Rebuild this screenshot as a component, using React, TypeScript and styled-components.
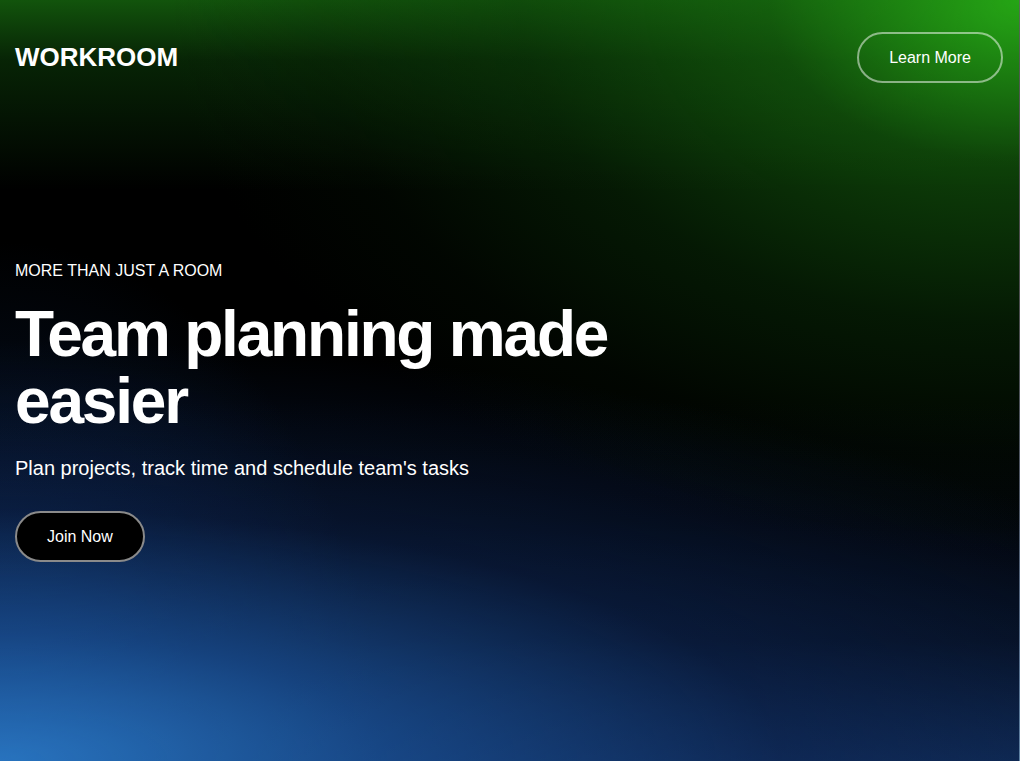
import React from "react";
import styled, { createGlobalStyle } from "styled-components";

const Global = createGlobalStyle`
  html, body { margin: 0; padding: 0; background: #000; }
  body { font-family: "Liberation Sans", Arial, sans-serif; color: #fff; }
  * { box-sizing: border-box; }
`;

const Page = styled.div`
  min-height: 761px;
  display: flex;
  flex-direction: column;
  border-right: 1px solid rgba(140, 140, 140, 0.55);
  background:
    radial-gradient(ellipse 1000px 650px at 100% 0%, rgba(37, 165, 21, 1) 0%, rgba(22, 105, 14, 0.6) 25%, rgba(12, 62, 9, 0.4) 50%, rgba(8, 40, 6, 0.15) 70%, transparent 85%),
    linear-gradient(180deg, rgba(18, 84, 12, 1) 0%, rgba(12, 60, 9, 0.6) 60px, transparent 190px),
    radial-gradient(ellipse 1300px 420px at 0% 100%, rgba(40, 115, 190, 1) 0%, rgba(26, 80, 150, 0.75) 30%, rgba(14, 40, 90, 0.45) 60%, transparent 100%),
    radial-gradient(ellipse 380px 520px at 0% 100%, rgba(20, 70, 140, 0.6) 0%, rgba(12, 40, 85, 0.35) 55%, transparent 100%),
    linear-gradient(0deg, rgba(18, 50, 100, 0.8) 0%, rgba(10, 28, 60, 0.5) 120px, rgba(6, 16, 36, 0.25) 240px, transparent 360px),
    #000;
`;

const Header = styled.header`
  display: flex;
  align-items: center;
  justify-content: space-between;
  padding: 32px 16px 0 15px;
`;

const Logo = styled.div`
  font-size: 26px;
  font-weight: 700;
`;

const PillButton = styled.button<{ $dark?: boolean }>`
  font-family: "Liberation Sans", Arial, sans-serif;
  font-size: 16px;
  line-height: 19px;
  color: #fff;
  padding: 14px 30px;
  border-radius: 26px;
  background: ${(p) => (p.$dark ? "#000" : "transparent")};
  border: 2px solid ${(p) => (p.$dark ? "#8a8a8a" : "rgba(255,255,255,0.5)")};
  cursor: pointer;
`;

const Hero = styled.section`
  display: flex;
  flex-direction: column;
  align-items: flex-start;
  padding: 179px 15px 0;
`;

const Eyebrow = styled.p`
  margin: 0;
  font-size: 16px;
  text-transform: uppercase;
`;

const Title = styled.h1`
  margin: 21px 0 0;
  max-width: 640px;
  font-size: 64px;
  line-height: 67px;
  font-weight: 700;
  letter-spacing: -2.2px;
`;

const Subtitle = styled.p`
  margin: 22px 0 31px;
  font-size: 20px;
`;

export default function App() {
  return (
    <>
      <Global />
      <Page>
        <Header>
          <Logo>WORKROOM</Logo>
          <PillButton>Learn More</PillButton>
        </Header>
        <Hero>
          <Eyebrow>More than just a room</Eyebrow>
          <Title>Team planning made easier</Title>
          <Subtitle>Plan projects, track time and schedule team's tasks</Subtitle>
          <PillButton $dark>Join Now</PillButton>
        </Hero>
      </Page>
    </>
  );
}
